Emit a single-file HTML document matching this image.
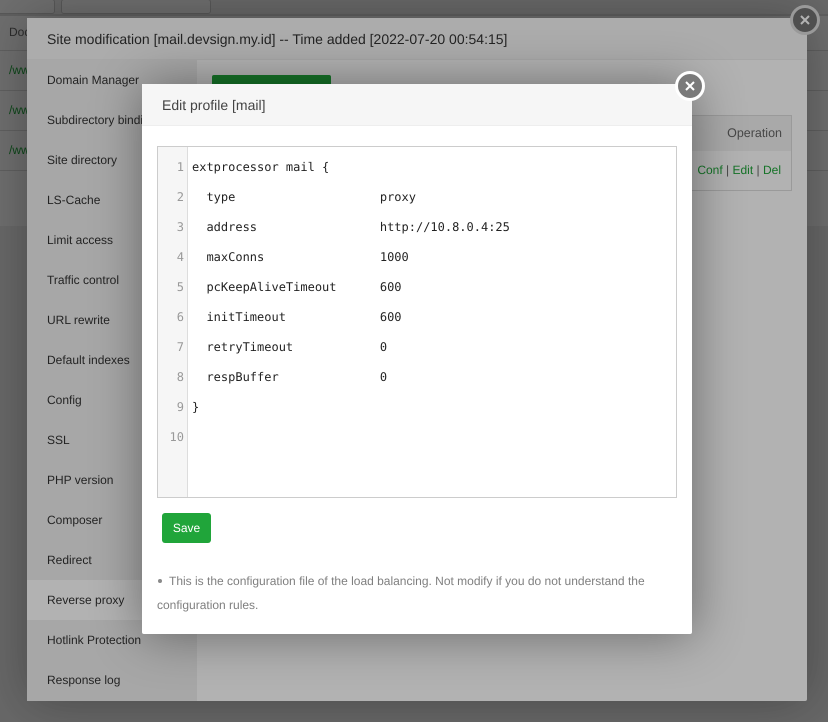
<!DOCTYPE html>
<html>
<head>
<meta charset="utf-8">
<style>
html,body{margin:0;padding:0;}
body{width:828px;height:722px;overflow:hidden;position:relative;background:#f0f0f0;font-family:"Liberation Sans",sans-serif;text-rendering:geometricPrecision;}
.abs{position:absolute;}
.shade{position:absolute;left:0;top:0;width:828px;height:722px;background:rgba(0,0,0,.3);}
.shade.first{background:rgba(0,0,0,.38);}
.panel{left:0;top:15px;width:828px;height:211px;background:#fff;}
.hl{left:0;width:828px;height:1px;background:#ddd;}
.inp{border:1px solid #ccc;background:#fff;border-radius:3px;box-sizing:border-box;height:15px;top:-1px;}
.lnk{left:9px;font-size:12px;color:#20a53a;line-height:14px;}
.m1{left:27px;top:18px;width:780px;height:683px;background:#fff;border-radius:2px;box-shadow:1px 1px 50px rgba(0,0,0,.3);}
.m1h{left:0;top:0;width:780px;height:41px;background:#f6f6f6;border-bottom:1px solid #eee;font-size:14px;line-height:43px;color:#333;text-indent:20px;white-space:nowrap;}
.side{left:0;top:42px;width:170px;height:641px;background:#f0f0f0;}
.side div{height:40px;line-height:40px;font-size:12px;color:#333;padding-left:20px;white-space:nowrap;}
.side .on{background:#fff;}
.gbtn{left:185px;top:57px;width:119px;height:30px;background:#20a53a;border-radius:2px;}
.th{left:185px;top:97px;width:580px;height:36px;background:#f2f2f2;border:1px solid #ddd;border-bottom:none;box-sizing:border-box;font-size:12.5px;color:#666;line-height:34px;text-align:right;padding-right:9px;}
.td{left:185px;top:133px;width:580px;height:40px;border:1px solid #ddd;border-top:none;box-sizing:border-box;font-size:12px;color:#666;line-height:38px;text-align:right;padding-right:10px;}
.td span{color:#20a53a;}
.close{box-sizing:border-box;border-radius:50%;border:3px solid #fff;background:#7a7a7a;width:30px;height:30px;}
.close.o{border-color:#dcdcdc;background:#727272;}
.close svg{position:absolute;left:0;top:0;}
.m2{left:142px;top:84px;width:550px;height:550px;background:#fff;border-radius:2px;box-shadow:1px 1px 50px rgba(0,0,0,.42);}
.m2h{left:0;top:0;width:550px;height:41px;background:#f6f6f6;border-bottom:1px solid #eee;font-size:14px;line-height:43px;color:#444;text-indent:20px;}
.ed{left:15px;top:62px;width:520px;height:352px;border:1px solid #ccc;box-sizing:border-box;background:#fff;}
.gut{left:0;top:0;width:29px;height:350px;background:#f6f6f6;border-right:1px solid #ddd;box-sizing:content-box;}
.n,.c{position:absolute;font-family:"DejaVu Sans Mono",monospace;font-size:12px;line-height:30px;height:30px;white-space:pre;}
.n{left:0;width:26px;text-align:right;color:#999;}
.c{left:34px;color:#222;}
.save{left:20px;top:429px;width:49px;height:30px;background:#20a53a;border-radius:3px;color:#fff;font-size:12px;line-height:30px;text-align:center;}
.note{font-size:12px;color:#7f7f7f;line-height:24px;white-space:nowrap;}
</style>
</head>
<body>
<div class="abs panel"></div>
<div class="abs" style="left:0;top:14px;width:828px;height:2px;background:#ddd;"></div>
<div class="abs inp" style="left:-10px;width:65px;"></div>
<div class="abs inp" style="left:61px;width:150px;"></div>
<div class="abs" style="left:9px;top:25px;font-size:12px;color:#666;line-height:14px;">Document</div>
<div class="abs hl" style="top:50px;"></div>
<div class="abs hl" style="top:90px;"></div>
<div class="abs hl" style="top:130px;"></div>
<div class="abs hl" style="top:170px;"></div>
<div class="abs lnk" style="top:63px;">/www</div>
<div class="abs lnk" style="top:103px;">/www</div>
<div class="abs lnk" style="top:143px;">/www</div>

<div class="shade first"></div>

<div class="abs m1">
  <div class="abs m1h">Site modification [mail.devsign.my.id] -- Time added [2022-07-20 00:54:15]</div>
  <div class="abs side">
    <div>Domain Manager</div>
    <div>Subdirectory binding</div>
    <div>Site directory</div>
    <div>LS-Cache</div>
    <div>Limit access</div>
    <div>Traffic control</div>
    <div>URL rewrite</div>
    <div>Default indexes</div>
    <div>Config</div>
    <div>SSL</div>
    <div>PHP version</div>
    <div>Composer</div>
    <div>Redirect</div>
    <div class="on">Reverse proxy</div>
    <div>Hotlink Protection</div>
    <div>Response log</div>
  </div>
  <div class="abs gbtn"></div>
  <div class="abs th">Operation</div>
  <div class="abs td"><span>Conf</span> | <span>Edit</span> | <span>Del</span></div>
</div>
<div class="abs close o" style="left:790px;top:5px;">
  <svg width="24" height="24" viewBox="0 0 24 24"><path d="M8 8L16 16M16 8L8 16" stroke="#fff" stroke-width="2" fill="none"/></svg>
</div>

<div class="shade"></div>

<div class="abs m2">
  <div class="abs m2h">Edit profile [mail]</div>
  <div class="abs ed">
    <div class="abs gut"></div>
    <div class="n" style="top:5px;">1</div><div class="c" style="top:5px;">extprocessor mail {</div>
    <div class="n" style="top:35px;">2</div><div class="c" style="top:35px;">  type                    proxy</div>
    <div class="n" style="top:65px;">3</div><div class="c" style="top:65px;">  address                 http://10.8.0.4:25</div>
    <div class="n" style="top:95px;">4</div><div class="c" style="top:95px;">  maxConns                1000</div>
    <div class="n" style="top:125px;">5</div><div class="c" style="top:125px;">  pcKeepAliveTimeout      600</div>
    <div class="n" style="top:155px;">6</div><div class="c" style="top:155px;">  initTimeout             600</div>
    <div class="n" style="top:185px;">7</div><div class="c" style="top:185px;">  retryTimeout            0</div>
    <div class="n" style="top:215px;">8</div><div class="c" style="top:215px;">  respBuffer              0</div>
    <div class="n" style="top:245px;">9</div><div class="c" style="top:245px;">}</div>
    <div class="n" style="top:275px;">10</div>
  </div>
  <div class="abs save">Save</div>
  <svg class="abs" style="left:15px;top:494px;" width="6" height="6" viewBox="0 0 6 6"><circle cx="3" cy="3" r="2" fill="#8a8a8a"/></svg>
  <div class="abs note" style="left:27px;top:485px;">This is the configuration file of the load balancing. Not modify if you do not understand the</div>
  <div class="abs note" style="left:15px;top:509px;">configuration rules.</div>
</div>
<div class="abs close" style="left:675px;top:71px;">
  <svg width="24" height="24" viewBox="0 0 24 24"><path d="M8 8L16 16M16 8L8 16" stroke="#fff" stroke-width="2" fill="none"/></svg>
</div>
</body>
</html>
